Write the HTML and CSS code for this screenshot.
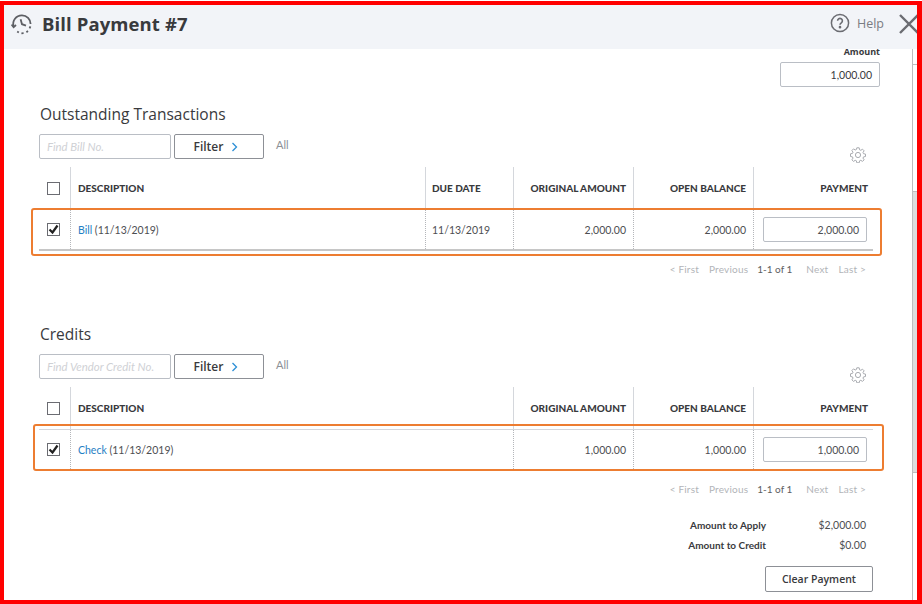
FILE: index.html
```html
<!DOCTYPE html>
<html lang="en">
<head>
<meta charset="utf-8">
<title>Bill Payment #7</title>
<link rel="stylesheet" href="styles.css">
</head>
<body>
<div class="frame">
  <header class="topbar">
    <svg class="history" width="22" height="22" viewBox="0 0 22 22" fill="none" stroke="#5d5f64" stroke-width="1.8">
      <path d="M2.6 13.5A8.6 8.6 0 0 1 11 2.4a8.6 8.6 0 0 1 8.6 8.6" />
      <path d="M19.4 13.4l-.8 2M17 18l-1.6 1.2M12.6 20.2l-2.2.1M7.8 19.6l-1.6-1" />
      <path d="M.6 11.6l2 2.6 2.4-2.2" />
      <path d="M9.6 6.2l1.4 5 4 1.4" />
    </svg>
    <h1 class="title">Bill Payment #7</h1>
    <div class="help">
      <svg width="20" height="20" viewBox="0 0 20 20" fill="none" stroke="#6b6c72" stroke-width="1.5"><circle cx="10" cy="10" r="8.6"/><path d="M7.6 7.8a2.4 2.4 0 1 1 3.7 2c-.9.6-1.3 1-1.3 2" stroke-width="1.6"/><circle cx="10" cy="14.2" r=".6" fill="#6b6c72"/></svg>
      <span>Help</span>
    </div>
    <svg class="close" width="18" height="20" viewBox="0 0 18 20" fill="none" stroke="#6b6c72" stroke-width="2.4"><path d="M1 1l18 18M19 1L1 19"/></svg>
  </header>
  <div class="body">
    <main class="content">
      <div class="amount">
        <label class="amount-label">Amount</label>
        <div class="field amount-field">1,000.00</div>
      </div>

      <section class="section">
        <h2 class="section-title">Outstanding Transactions</h2>
        <div class="filters">
          <div class="field search">Find Bill No.</div>
          <button class="filter-btn">Filter <svg width="7" height="10" viewBox="0 0 7 10" fill="none" stroke="#2c8fd6" stroke-width="1.3"><path d="M1.5 1l4 4-4 4"/></svg></button>
          <span class="all">All</span>
          <svg class="gear" width="16" height="16" viewBox="0 0 16 16" fill="none" stroke="#a9abb0" stroke-width="1"><circle cx="8" cy="8" r="2.6"/><path d="M6.8 .8h2.4l.4 2 1.2.5 1.7-1.1 1.6 1.6-1.1 1.7.5 1.2 2 .4v2.4l-2 .4-.5 1.2 1.1 1.7-1.6 1.6-1.7-1.1-1.2.5-.4 2H6.8l-.4-2-1.2-.5-1.7 1.1-1.6-1.6 1.1-1.7-.5-1.2-2-.4V6.8l2-.4.5-1.2-1.1-1.7 1.6-1.6 1.7 1.1 1.2-.5z"/></svg>
        </div>
        <div class="table bills">
          <div class="grid-row head">
            <div class="cell check-cell"><span class="check"></span></div>
            <div class="cell">DESCRIPTION</div>
            <div class="cell date">DUE DATE</div>
            <div class="cell num">ORIGINAL AMOUNT</div>
            <div class="cell num">OPEN BALANCE</div>
            <div class="cell num pay-head">PAYMENT</div>
          </div>
          <div class="grid-row data">
            <div class="cell check-cell"><span class="check on"><svg width="13" height="13" viewBox="0 0 13 13" fill="none" stroke="#222" stroke-width="2.2"><path d="M2.5 6.5l3 3 5-7"/></svg></span></div>
            <div class="cell"><span><a class="link">Bill</a> (11/13/2019)</span></div>
            <div class="cell date">11/13/2019</div>
            <div class="cell num">2,000.00</div>
            <div class="cell num">2,000.00</div>
            <div class="cell pay"><div class="field pay-field">2,000.00</div></div>
          </div>
          <div class="highlight hl-bills"></div>
        </div>
        <div class="pager"><span>&lt; First</span><span>Previous</span><span class="count">1-1 of 1</span><span>Next</span><span>Last &gt;</span></div>
      </section>

      <section class="section">
        <h2 class="section-title">Credits</h2>
        <div class="filters">
          <div class="field search">Find Vendor Credit No.</div>
          <button class="filter-btn">Filter <svg width="7" height="10" viewBox="0 0 7 10" fill="none" stroke="#2c8fd6" stroke-width="1.3"><path d="M1.5 1l4 4-4 4"/></svg></button>
          <span class="all">All</span>
          <svg class="gear" width="16" height="16" viewBox="0 0 16 16" fill="none" stroke="#a9abb0" stroke-width="1"><circle cx="8" cy="8" r="2.6"/><path d="M6.8 .8h2.4l.4 2 1.2.5 1.7-1.1 1.6 1.6-1.1 1.7.5 1.2 2 .4v2.4l-2 .4-.5 1.2 1.1 1.7-1.6 1.6-1.7-1.1-1.2.5-.4 2H6.8l-.4-2-1.2-.5-1.7 1.1-1.6-1.6 1.1-1.7-.5-1.2-2-.4V6.8l2-.4.5-1.2-1.1-1.7 1.6-1.6 1.7 1.1 1.2-.5z"/></svg>
        </div>
        <div class="table credits">
          <div class="grid-row head">
            <div class="cell check-cell"><span class="check"></span></div>
            <div class="cell">DESCRIPTION</div>
            <div class="cell num">ORIGINAL AMOUNT</div>
            <div class="cell num">OPEN BALANCE</div>
            <div class="cell num pay-head">PAYMENT</div>
          </div>
          <div class="grid-row data">
            <div class="cell check-cell"><span class="check on"><svg width="13" height="13" viewBox="0 0 13 13" fill="none" stroke="#222" stroke-width="2.2"><path d="M2.5 6.5l3 3 5-7"/></svg></span></div>
            <div class="cell"><span><a class="link">Check</a> (11/13/2019)</span></div>
            <div class="cell num">1,000.00</div>
            <div class="cell num">1,000.00</div>
            <div class="cell pay"><div class="field pay-field">1,000.00</div></div>
          </div>
          <div class="highlight hl-credits"></div>
        </div>
        <div class="pager"><span>&lt; First</span><span>Previous</span><span class="count">1-1 of 1</span><span>Next</span><span>Last &gt;</span></div>
      </section>

      <div class="totals">
        <div class="total-row"><span class="total-label">Amount to Apply</span><span class="total-value">$2,000.00</span></div>
        <div class="total-row"><span class="total-label">Amount to Credit</span><span class="total-value">$0.00</span></div>
      </div>
      <div class="actions"><button class="clear-btn">Clear Payment</button></div>
    </main>
    <div class="scrollbar">
      <div class="sb-btn"></div>
      <div class="sb-track"></div>
      <div class="sb-thumb"></div>
      <div class="sb-rest"></div>
    </div>
  </div>
</div>
</body>
</html>
```
FILE: styles.css
```css
* { box-sizing: border-box; }
html, body { margin: 0; padding: 0; background: #fff; }
body { width: 922px; height: 604px; overflow: hidden; padding-top: 1px; font-family: "Lato", "Open Sans", sans-serif; color: #393a3d; }
.frame { width: 922px; height: 603px; border: solid #ff0000; border-width: 4px 5px 4px 4px; display: flex; flex-direction: column; overflow: hidden; background: #fff; }

.topbar { height: 44px; flex: none; background: #f2f4f8; display: flex; align-items: center; padding: 0 0 7px 7px; }
.history { flex: none; }
.title { margin: 0 0 0 9px; font: 700 18.5px "Open Sans", sans-serif; color: #393a3d; letter-spacing: .1px; }
.help { margin-left: auto; display: flex; align-items: center; gap: 7px; font: 400 12.5px "Open Sans", sans-serif; color: #7a7c82; margin-top: -1px; }
.close { margin-left: 15px; flex: none; }

.body { flex: 1; display: flex; min-height: 0; }
.content { width: 908px; flex: none; padding-left: 35px; overflow: hidden; }

.amount { width: 841px; display: flex; flex-direction: column; align-items: flex-end; height: 56px; }
.amount-label { font: 700 9px/6px "Open Sans", sans-serif; color: #393a3d; height: 6px; }
.field { border: 1px solid #babec5; border-radius: 2px; background: #fff; font-size: 10.5px; display: flex; align-items: center; }
.amount-field { width: 100px; height: 25px; margin-top: 7px; justify-content: flex-end; padding-right: 7px; color: #393a3d; }

.section { height: 220px; }
.section-title { margin: 0 0 0 1px; font: 400 15.5px/18px "Open Sans", sans-serif; color: #393a3d; height: 29px; }
.filters { display: flex; align-items: center; height: 25px; width: 834px; }
.search { width: 132px; height: 25px; padding-left: 7px; font-style: italic; color: #cfd1d5; font-size: 11.4px; }
.filter-btn { width: 90px; height: 25px; margin-left: 3px; background: #fff; border: 1px solid #8d9096; border-radius: 2px; font: 600 12px "Open Sans", sans-serif; color: #393a3d; display: flex; align-items: center; justify-content: center; gap: 8px; padding: 0 6px 0 0; }
.all { margin-left: 12px; font-size: 11px; color: #8d9096; margin-top: -4px; }
.gear { margin-left: auto; margin-right: 7px; margin-top: 17px; }

.table { position: relative; width: 834px; margin-top: 8px; }
.grid-row { display: grid; }
.bills .grid-row { grid-template-columns: 31px 355px 88px 120px 120px 120px; }
.credits .grid-row { grid-template-columns: 31px 443px 120px 120px 120px; }
.head { height: 43px; font-size: 10px; font-weight: 900; color: #393a3d; border-bottom: 1px solid #d4d7dc; }
.data { height: 41px; font-size: 10.5px; color: #4d4e52; border-bottom: 2px solid #c6c6c6; }
.cell { display: flex; align-items: center; padding: 0 7px; }
.head .cell + .cell { border-left: 1px solid #d4d7dc; }
.data .cell + .cell { border-left: 1px dotted #b4b6ba; }
.num { justify-content: flex-end; }
.cell.date { padding-left: 6px; }
.pay-head { padding-right: 5px; }
.check-cell { padding: 0 0 0 8px; }
.check { width: 13px; height: 13px; border: 1px solid #6b6c72; display: block; position: relative; }
.check svg { display: block; margin: -1px; }
.link { color: #1f80c4; }
.pay { padding: 0 6px 0 9px; }
.pay-field { width: 104px; height: 25px; justify-content: flex-end; padding-right: 7px; color: #4d4e52; }

.highlight { position: absolute; border: 2px solid #ed7d31; border-radius: 3px; pointer-events: none; }
.hl-bills { left: -8px; top: 41px; width: 851px; height: 48px; }
.hl-credits { left: -6px; top: 37px; width: 851px; height: 47px; }

.pager { width: 827px; height: 20px; margin-top: 8px; display: flex; justify-content: flex-end; gap: 10px; font-size: 10px; letter-spacing: .2px; color: #b2b4b8; align-items: center; }
.pager .count { color: #5d5e62; letter-spacing: 0; margin: 0 4px 0 -1px; }

.totals { width: 827px; margin-top: -30px; }
.total-row { display: flex; justify-content: flex-end; align-items: center; height: 20px; }
.total-label { width: 100px; text-align: right; font-size: 10px; font-weight: 700; color: #393a3d; }
.total-value { width: 100px; text-align: right; font-size: 10.5px; color: #4d4e52; }
.actions { width: 834px; display: flex; justify-content: flex-end; margin-top: 11px; }
.clear-btn { width: 108px; height: 26px; background: #fff; border: 1px solid #8d9096; border-radius: 2px; font: 600 10.5px "Open Sans", sans-serif; color: #393a3d; padding: 0; }

.scrollbar { width: 5px; flex: none; border-left: 1px solid #bdbdbd; display: flex; flex-direction: column; }
.sb-btn { height: 16px; border-bottom: 1px solid #bdbdbd; }
.sb-track { height: 126px; }
.sb-thumb { height: 282px; background: #dcdcdc; border-top: 1px solid #bdbdbd; border-bottom: 1px solid #bdbdbd; }
.sb-rest { flex: 1; }
```
